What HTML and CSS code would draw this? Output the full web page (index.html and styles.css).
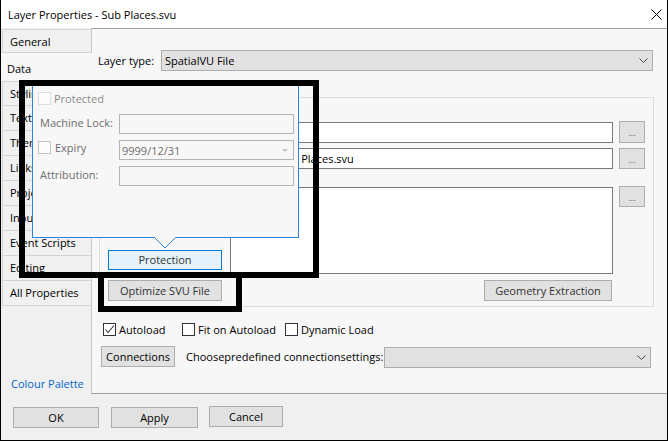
FILE: index.html
```html
<!DOCTYPE html>
<html>
<head>
<meta charset="utf-8">
<title>Layer Properties - Sub Places.svu</title>
<link rel="stylesheet" href="styles.css">
</head>
<body>
<div class="window">
  <div class="titlebar">
    <span class="title">Layer Properties - Sub Places.svu</span>
    <svg class="close" width="11" height="11" viewBox="0 0 11 11"><path d="M0.5 0.5L10.5 10.5M10.5 0.5L0.5 10.5" stroke="#000" stroke-width="1" fill="none"/></svg>
  </div>
  <div class="main">
    <div class="sidebar">
      <div class="tab first">General</div>
      <div class="tab sel">Data</div>
      <div class="tab after">Styling</div>
      <div class="tab">Text</div>
      <div class="tab">Themes</div>
      <div class="tab">Links</div>
      <div class="tab">Projection</div>
      <div class="tab">Input</div>
      <div class="tab">Event Scripts</div>
      <div class="tab">Editing</div>
      <div class="tab">All Properties</div>
      <div class="spacer"></div>
      <a class="palette">Colour Palette</a>
    </div>
    <div class="panel">
      <div class="lt-row">
        <span class="lt-label">Layer type:</span>
        <div class="combo lt-combo">
          <span>SpatialVU File</span>
          <svg class="chev" width="9" height="5" viewBox="0 0 9 5"><polyline points="0.5,0.5 4.5,4.5 8.5,0.5" stroke="#444" fill="none"/></svg>
        </div>
      </div>
      <div class="group">
        <span class="glabel r1">Name:</span>
        <div class="field r1 c2">Sub Places</div>
        <button class="btn ell r1 e1">...</button>
        <span class="glabel r2">File:</span>
        <div class="field r2 c2">C:\Maps\Sub Places.svu</div>
        <button class="btn ell r2">...</button>
        <div class="desc-col">
          <span class="glabel-d">Description:</span>
          <button class="btn gbtn protect">Protection</button>
        </div>
        <div class="field area c2"></div>
        <button class="btn ell r3">...</button>
        <button class="btn gbtn optimize">Optimize SVU File</button>
        <button class="btn gbtn geom">Geometry Extraction</button>
      </div>
      <div class="checks">
        <label class="chk w1"><span class="box"><svg width="11" height="11" viewBox="0 0 11 11"><polyline points="1.5,5.5 4,8.5 10,1.5" stroke="#333" stroke-width="1.1" fill="none"/></svg></span><span>Autoload</span></label>
        <label class="chk w2"><span class="box"></span><span>Fit on Autoload</span></label>
        <label class="chk"><span class="box"></span><span>Dynamic Load</span></label>
      </div>
      <div class="conn-row">
        <button class="btn conn">Connections</button>
        <span class="conn-label">Choosepredefined connectionsettings:</span>
        <div class="combo conn-combo">
          <span></span>
          <svg class="chev" width="9" height="5" viewBox="0 0 9 5"><polyline points="0.5,0.5 4.5,4.5 8.5,0.5" stroke="#444" fill="none"/></svg>
        </div>
      </div>
    </div>
  </div>
  <div class="footer">
    <button class="btn fbtn ok">OK</button>
    <button class="btn fbtn apply">Apply</button>
    <button class="btn fbtn cancel">Cancel</button>
  </div>

  <div class="popup">
    <div class="p-protected"><span class="pbox light"></span><span>Protected</span></div>
    <span class="plabel">Machine Lock:</span>
    <div class="pfield"></div>
    <div class="plabel pcheck"><span class="pbox"></span><span class="exp">Expiry</span></div>
    <div class="pfield pdate"><span>9999/12/31</span><svg width="6" height="3" viewBox="0 0 6 3"><polygon points="0,0 6,0 3,3" fill="#c4c4c4"/></svg></div>
    <span class="plabel">Attribution:</span>
    <div class="pfield"></div>
    <svg class="arrow" width="22" height="12" viewBox="0 0 22 12"><polygon points="0,0 11,11 22,0" fill="#f7f7f7"/><polyline points="0.5,0.5 11,11 21.5,0.5" stroke="#2b84d8" stroke-width="1" fill="none"/></svg>
  </div>

  <div class="anno anno1"></div>
  <div class="anno anno2"></div>
</div>
</body>
</html>
```

FILE: styles.css
```css
* { box-sizing: border-box; }
html, body { margin: 0; padding: 0; }
body {
  width: 668px;
  height: 441px;
  overflow: hidden;
  font-family: "Open Sans", "Noto Sans", sans-serif;
  font-size: 11px;
  color: #000;
  background: #fff;
}
.window {
  position: relative;
  width: 668px;
  height: 441px;
  border-left: 1px solid #000;
  border-right: 1px solid #000;
  border-bottom: 1px solid #000;
  background: #f0f0f0;
  display: flex;
  flex-direction: column;
}
.titlebar {
  flex: none;
  height: 28px;
  background: #fff;
  display: flex;
  align-items: center;
  padding-left: 7px;
}
.title { flex: 1; font-size: 11px; line-height: 15px; }
.close { margin-right: 5px; }

.main { flex: none; height: 366px; display: flex; }
.sidebar {
  flex: none;
  width: 90px;
  display: flex;
  flex-direction: column;
  padding-top: 1px;
}
.tab {
  flex: none;
  height: 25px;
  margin-left: 1px;
  border-left: 1px solid #d4d4d4;
  border-bottom: 1px solid #d4d4d4;
  padding-left: 7px;
  line-height: 24px;
  white-space: nowrap;
  overflow: hidden;
  background: #f0f0f0;
}
.tab.first { height: 24px; border-top: 1px solid #d4d4d4; line-height: 24px; }
.tab.sel {
  height: 28px;
  margin-left: 0;
  margin-right: -1px;
  border: none;
  background: #f7f7f7;
  position: relative;
  z-index: 1;
  padding-left: 6px;
  line-height: 31px;
}
.tab.after { border-top: 1px solid #d4d4d4; line-height: 23px; }
.spacer { flex: 1; }
.palette {
  color: #0066cc;
  padding-left: 10px;
  line-height: 15px;
  margin-bottom: 3px;
}

.panel {
  flex: 1;
  background: #f7f7f7;
  border-top: 1px solid #a0a0a0;
  border-left: 1px solid #c8c8c8;
  border-bottom: 1px solid #a0a0a0;
  padding-top: 21px;
  display: flex;
  flex-direction: column;
}
.lt-row { display: flex; align-items: center; height: 21px; padding-left: 6px; }
.lt-label { width: 63px; }
.combo {
  height: 21px;
  background: #e1e1e1;
  border: 1px solid #adadad;
  display: flex;
  align-items: center;
  justify-content: space-between;
  padding-left: 3px;
  padding-right: 4px;
}
.lt-combo { width: 492px; }
.chev { display: block; }

.btn {
  font: inherit;
  color: #000;
  background: #e1e1e1;
  border: 1px solid #adadad;
  padding: 0;
  margin: 0;
  height: 21px;
  line-height: 19px;
  text-align: center;
  white-space: nowrap;
}

.group {
  margin: 26px 0 0 7px;
  width: 555px;
  height: 210px;
  border: 1px solid #dcdcdc;
  padding-top: 24px;
  display: grid;
  grid-template-columns: 130px 383px 6px 26px;
  grid-template-rows: 21px 26px 105px 27px;
  align-items: end;
}
.glabel { grid-column: 1; padding-left: 6px; line-height: 21px; }
.glabel.r1 { grid-row: 1; }
.glabel.r2 { grid-row: 2; }
.field {
  height: 21px;
  background: #fff;
  border: 1px solid #7a7a7a;
  padding-left: 2px;
  line-height: 19px;
  white-space: nowrap;
  overflow: hidden;
}
.field.c2 { grid-column: 2; }
.field.r1 { grid-row: 1; }
.field.r2 { grid-row: 2; }
.field.area { grid-row: 3; height: 87px; }
.ell {
  grid-column: 4;
  width: 26px;
  font-size: 9px;
  line-height: 21px;
  color: #555;
}
.ell.r1 { grid-row: 1; height: 22px; }
.ell.r2 { grid-row: 2; }
.ell.r3 { grid-row: 3; align-self: start; margin-top: 17px; }
.desc-col {
  grid-column: 1;
  grid-row: 3;
  align-self: stretch;
  display: flex;
  flex-direction: column;
  justify-content: space-between;
  align-items: flex-start;
  padding: 18px 0 4px 8px;
}
.gbtn { width: 114px; color: #333; }
.protect {
  height: 20px;
  line-height: 18px;
  background: #e5f1fb;
  border-color: #0078d7;
}
.optimize { grid-column: 1; grid-row: 4; margin-left: 8px; }
.geom { grid-column: 2; grid-row: 4; justify-self: end; width: 128px; margin-right: 1px; }

.checks {
  display: flex;
  align-items: center;
  margin-top: 16px;
  padding-left: 11px;
  height: 13px;
}
.chk { display: flex; align-items: center; line-height: 13px; }
.chk.w1 { width: 79px; }
.chk.w2 { width: 103px; }
.box {
  width: 13px;
  height: 13px;
  border: 1px solid #333;
  background: #fff;
  margin-right: 3px;
  flex: none;
}
.box svg { display: block; }

.conn-row {
  display: flex;
  align-items: flex-start;
  margin-top: 10px;
  padding-left: 9px;
}
.conn { width: 74px; }
.conn-label { margin-left: 11px; line-height: 21px; }
.conn-combo { width: 267px; margin-left: auto; margin-right: 16px; margin-top: 1px; }

.footer {
  flex: none;
  height: 46px;
  display: flex;
  align-items: flex-start;
  padding: 13px 0 0 12px;
}
.ok { width: 86px; }
.apply { width: 87px; margin-left: 12px; }
.cancel { width: 74px; margin-left: 11px; margin-top: -1px; }

.popup {
  position: absolute;
  left: 31px;
  top: 85px;
  width: 267px;
  height: 153px;
  border: 1px solid #2b84d8;
  background: #f7f7f7;
  padding-top: 6px;
  display: grid;
  grid-template-columns: 86px 175px;
  grid-template-rows: 13px 29px 26px 26px;
  align-items: end;
  align-content: start;
  color: #6d6d6d;
  z-index: 2;
}
.p-protected {
  grid-column: 1 / span 2;
  display: flex;
  align-items: center;
  padding-left: 5px;
  height: 13px;
  color: #8a8a8a;
}
.pbox {
  width: 13px;
  height: 13px;
  border: 1px solid #c4c4c4;
  background: #fcfcfc;
  margin-right: 3px;
  flex: none;
}
.pbox.light { border-color: #dcdcdc; }
.plabel { padding-left: 7px; height: 20px; line-height: 17px; }
.pcheck { display: flex; align-items: flex-start; padding-left: 5px; padding-top: 1px; }
.exp { margin-left: 1px; line-height: 13px; }
.pfield {
  height: 20px;
  border: 1px solid #b4b4b4;
  background: #f7f7f7;
}
.pdate {
  display: flex;
  align-items: center;
  justify-content: space-between;
  padding: 0 5px 0 2px;
  color: #6d6d6d;
}
.pdate svg { display: block; }
.arrow { position: absolute; left: 121px; top: 151px; display: block; }

.anno { position: absolute; border: 6px solid #000; z-index: 3; }
.anno1 { left: 18px; top: 80px; width: 300px; height: 198px; }
.anno2 { left: 97px; top: 272px; width: 144px; height: 40px; }
```
